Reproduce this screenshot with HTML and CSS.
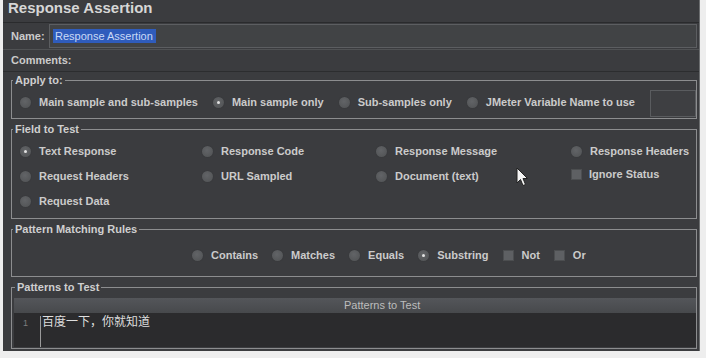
FILE: index.html
```html
<!DOCTYPE html>
<html>
<head>
<meta charset="utf-8">
<link rel="stylesheet" href="styles.css">
</head>
<body>
<div class="app">
  <div class="title">Response Assertion</div>
  <div class="name-row">
    <span class="lbl name-lbl">Name:</span>
    <div class="input"><span class="sel">Response Assertion</span></div>
  </div>
  <div class="comments-row">
    <span class="lbl">Comments:</span>
  </div>

  <fieldset class="group apply">
    <legend>Apply to:</legend>
    <div class="apply-row">
      <label class="opt"><span class="radio"></span>Main sample and sub-samples</label>
      <label class="opt"><span class="radio on"></span>Main sample only</label>
      <label class="opt"><span class="radio"></span>Sub-samples only</label>
      <label class="opt"><span class="radio"></span>JMeter Variable Name to use</label>
      <div class="var-input"></div>
    </div>
  </fieldset>

  <fieldset class="group field">
    <legend>Field to Test</legend>
    <div class="field-grid">
      <label class="opt"><span class="radio on"></span>Text Response</label>
      <label class="opt"><span class="radio"></span>Response Code</label>
      <label class="opt"><span class="radio"></span>Response Message</label>
      <label class="opt"><span class="radio"></span>Response Headers</label>
      <label class="opt"><span class="radio"></span>Request Headers</label>
      <label class="opt"><span class="radio"></span>URL Sampled</label>
      <label class="opt"><span class="radio"></span>Document (text)</label>
      <label class="opt raised"><span class="check"></span>Ignore Status</label>
      <label class="opt"><span class="radio"></span>Request Data</label>
    </div>
  </fieldset>

  <fieldset class="group rules">
    <legend>Pattern Matching Rules</legend>
    <div class="rules-row">
      <label class="opt"><span class="radio"></span>Contains</label>
      <label class="opt"><span class="radio"></span>Matches</label>
      <label class="opt"><span class="radio"></span>Equals</label>
      <label class="opt"><span class="radio on"></span>Substring</label>
      <label class="opt"><span class="check"></span>Not</label>
      <label class="opt"><span class="check"></span>Or</label>
    </div>
  </fieldset>

  <fieldset class="group patterns">
    <legend>Patterns to Test</legend>
    <div class="table">
      <div class="thead">Patterns to Test</div>
      <div class="tbody">
        <div class="gutter">1</div>
        <div class="code">百度一下，你就知道</div>
      </div>
    </div>
  </fieldset>

  <svg class="cursor" width="13" height="20" viewBox="0 0 13 20">
    <path d="M1 1 L1 16 L4.5 12.5 L7 18.5 L9.5 17.5 L7 11.5 L11.5 11.5 Z" fill="#f4f4f4" stroke="#222" stroke-width="1"/>
  </svg>
</div>
</body>
</html>
```

FILE: styles.css
```css
* { box-sizing: border-box; }
html, body { margin: 0; padding: 0; }
body {
  background: #eeeeee;
  width: 706px;
  height: 358px;
  overflow: hidden;
  font-family: "Liberation Sans", Arial, sans-serif;
}
.app {
  position: relative;
  margin-left: 3px;
  width: 697px;
  height: 351px;
  background: #3b3c3f;
  border-right: 1px solid #6c6e70;
  color: #cbcbcb;
  font-size: 11px;
  font-weight: bold;
  overflow: hidden;
}
.title {
  height: 23px;
  padding-left: 5px;
  font-size: 15px;
  line-height: 15px;
  color: #d6d6d6;
  border-bottom: 1px solid #2a2b2d;
}
.name-row {
  height: 26px;
  display: flex;
  align-items: center;
  padding: 0 2px 0 8px;
}
.name-lbl { width: 38px; }
.input {
  flex: 1;
  height: 24px;
  background: #414345;
  border: 1px solid #5c5e61;
  display: flex;
  align-items: center;
  padding-left: 3px;
}
.sel {
  background: #2f5cbc;
  color: #c9d9f6;
  font-weight: normal;
  line-height: 14px;
  padding: 0 3px 0 2px;
}
.comments-row {
  height: 23px;
  display: flex;
  align-items: center;
  padding-left: 8px;
  padding-bottom: 2px;
  border-top: 1px solid #505254;
  border-bottom: 1px solid #2c2d2f;
}
.group {
  margin: 0 2px 0 8px;
  padding: 0;
  border: 1px solid #8c8d8f;
  min-width: 0;
}
.group legend {
  margin-left: 1px;
  padding: 0 2px;
  line-height: 14px;
  font-size: 11px;
  color: #cfcfcf;
}
.apply { margin-top: 1px; }
.field, .rules, .patterns { margin-top: 3px; }

.opt {
  display: flex;
  align-items: center;
  gap: 8px;
  white-space: nowrap;
  line-height: 13px;
}
.radio {
  width: 11px;
  height: 11px;
  border-radius: 50%;
  background: radial-gradient(circle at 45% 40%, #626467, #4f5153);
  box-shadow: 0 0 1px #2e2f31;
  display: flex;
  align-items: center;
  justify-content: center;
  flex: none;
}
.radio.on::after {
  content: "";
  width: 3px;
  height: 3px;
  border-radius: 50%;
  background: #e2e2e2;
}
.check {
  width: 11px;
  height: 11px;
  background: #5e6063;
  border: 1px solid #4c4e50;
  flex: none;
}

.apply-row {
  height: 31px;
  display: flex;
  align-items: center;
  gap: 15px;
  padding-left: 8px;
}
.var-input {
  margin-left: auto;
  width: 54px;
  height: 27px;
  margin-top: 2px;
  border: 1px solid #5a5c5f;
  background: #3e3f42;
}

.field-grid {
  display: grid;
  grid-template-columns: 182px 174px 195px auto;
  grid-auto-rows: 25px;
  align-items: center;
  padding: 3px 0 4px 8px;
}
.raised { margin-bottom: 4px; gap: 7px; }

.rules-row {
  height: 40px;
  display: flex;
  align-items: center;
  gap: 14px;
  padding-left: 180px;
  padding-bottom: 2px;
}

.patterns { padding: 4px 0 1px 2px; }
.table { display: flex; flex-direction: column; }
.thead {
  height: 15px;
  line-height: 15px;
  background: linear-gradient(#54565a, #47494c);
  color: #bdbdbd;
  font-weight: normal;
  padding-left: 330px;
}
.tbody {
  height: 34px;
  background: #2b2b2d;
  display: flex;
}
.gutter {
  width: 27px;
  border-right: 1px solid #9a9a9a;
  color: #7d7d7d;
  font-size: 9px;
  font-weight: normal;
  padding: 2px 0 0 9px;
  margin-top: 3px;
}
.code {
  padding: 0 0 0 1px;
  font-family: "Noto Sans CJK SC", "Liberation Sans", sans-serif;
  font-size: 12px;
  font-weight: normal;
  line-height: 16px;
  color: #dedede;
}
.cursor {
  position: absolute;
  left: 513px;
  top: 167px;
}
```
